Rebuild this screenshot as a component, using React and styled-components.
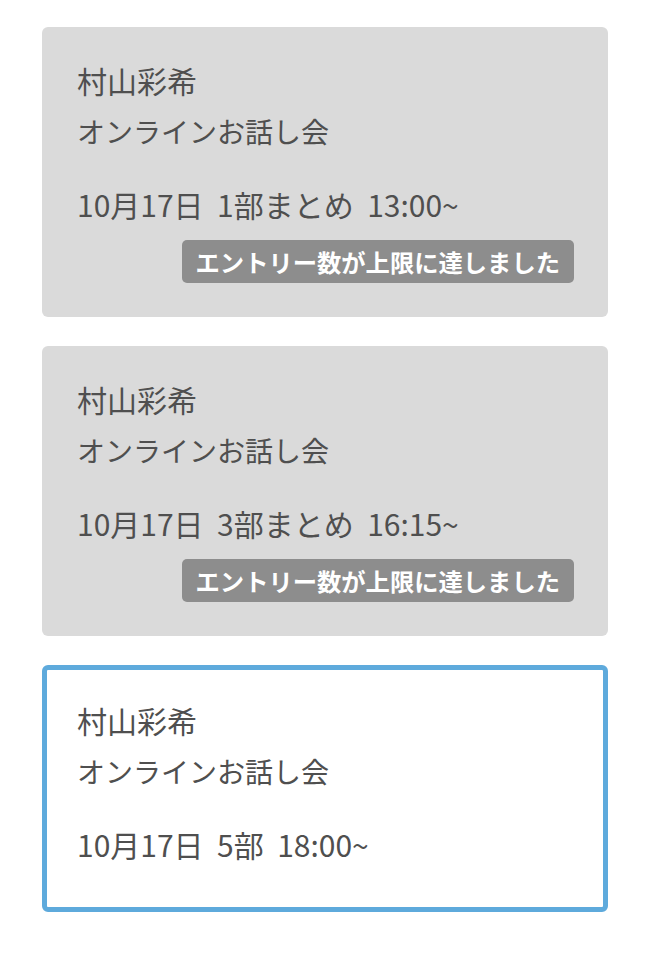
import React from "react";
import styled, { createGlobalStyle } from "styled-components";

const Global = createGlobalStyle`
  html, body { margin: 0; padding: 0; background: #ffffff; }
  body { font-family: "Noto Sans CJK JP", "Noto Sans", sans-serif; }
`;

const List = styled.div`
  display: flex;
  flex-direction: column;
  gap: 29px;
  padding: 27px 42px 40px 42px;
`;

const Card = styled.div`
  box-sizing: border-box;
  border-radius: 6px;
  background: ${(p) => (p.$active ? "#ffffff" : "#dadada")};
  border: ${(p) => (p.$active ? "5px solid #5eaadc" : "none")};
  padding: ${(p) => (p.$active ? "30px 30px 43px 30px" : "33px 34px 34px 35px")};
  display: flex;
  flex-direction: column;
  color: #4f4f4f;
`;

const Name = styled.div`
  font-size: 30px;
  line-height: 40px;
`;

const Event = styled.div`
  font-size: 28px;
  line-height: 38px;
  margin-top: 12px;
`;

const DateLine = styled.div`
  font-size: 30px;
  line-height: 40px;
  margin-top: 34px;
  white-space: pre;
`;

const Badge = styled.div`
  align-self: flex-end;
  margin-top: 16px;
  background: #8d8d8d;
  color: #ffffff;
  font-weight: 700;
  font-size: 24.3px;
  line-height: 43px;
  padding: 0 14px;
  border-radius: 5px;
`;

const items = [
  { date: "10月17日  1部まとめ  13:00~", full: true },
  { date: "10月17日  3部まとめ  16:15~", full: true },
  { date: "10月17日  5部  18:00~", full: false },
];

export default function App() {
  return (
    <>
      <Global />
      <List>
        {items.map((it, i) => (
          <Card key={i} $active={!it.full}>
            <Name>村山彩希</Name>
            <Event>オンラインお話し会</Event>
            <DateLine>{it.date}</DateLine>
            {it.full && <Badge>エントリー数が上限に達しました</Badge>}
          </Card>
        ))}
      </List>
    </>
  );
}
